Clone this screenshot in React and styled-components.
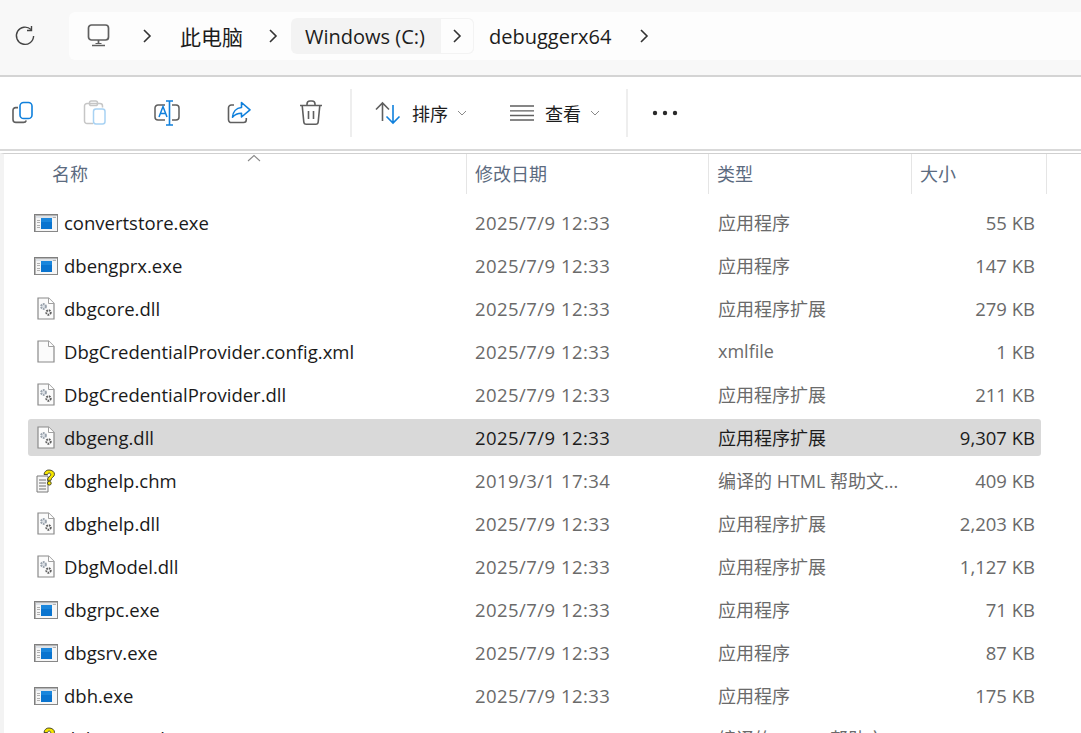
import React from "react";
import styled, { createGlobalStyle } from "styled-components";

const FONT = `"Open Sans", "Noto Sans CJK SC", sans-serif`;

const Global = createGlobalStyle`
  html, body { margin: 0; padding: 0; background: #fff; height: 733px; overflow: hidden; }
  body { font-family: ${FONT}; }
`;

const Page = styled.div`
  width: 1081px;
  height: 733px;
  display: flex;
  flex-direction: column;
  overflow: hidden;
  background: #fff;
`;

const AddressBar = styled.header`
  height: 75px;
  flex: none;
  background: #f8f8f8;
  border-bottom: 2px solid #d4d4d4;
  display: flex;
  align-items: center;
`;

const Refresh = styled.div`
  width: 69px;
  flex: none;
  display: flex;
  justify-content: center;
  padding-right: 20px;
  box-sizing: border-box;
  margin-top: -3px;
`;

const Crumbs = styled.nav`
  flex: 1;
  height: 48px;
  margin-top: -3px;
  background: #fdfdfd;
  border-radius: 6px 0 0 6px;
  display: flex;
  align-items: center;
  padding-left: 18px;
`;

const CrumbText = styled.span`
  font-size: ${(p) => p.$size}px;
  color: #1c1c1c;
  white-space: nowrap;
  margin-left: ${(p) => p.$ml || 0}px;
`;

const ChevronSlot = styled.span`
  display: flex;
  box-sizing: border-box;
  width: ${(p) => p.$w}px;
  padding-left: ${(p) => p.$pad}px;
`;

const HoverCrumb = styled.div`
  display: flex;
  align-items: stretch;
  height: 36px;
  background: #f3f3f3;
  border-radius: 6px;
  padding-left: 14px;
`;

const HoverLabel = styled.span`
  display: flex;
  align-items: center;
  width: 136px;
  font-size: 20px;
  color: #1c1c1c;
  white-space: nowrap;
`;

const HoverChevron = styled.span`
  width: 33px;
  box-sizing: border-box;
  display: flex;
  align-items: center;
  justify-content: center;
  background: #fdfdfd;
  border: 1px solid #f3f3f3;
  border-left: none;
  border-radius: 0 6px 6px 0;
`;

const Toolbar = styled.div`
  height: 72px;
  flex: none;
  display: flex;
  align-items: center;
  border-bottom: 2px solid #d9d9d9;
`;

const IconButton = styled.span`
  width: 72px;
  flex: none;
  display: flex;
  justify-content: center;
  &:first-child { width: 46px; margin-right: 13px; }
`;

const Divider = styled.span`
  width: 2px;
  height: 48px;
  background: #eeeeee;
  flex: none;
  margin: ${(p) => p.$margin};
`;

const MenuButton = styled.span`
  display: flex;
  align-items: center;
  flex: none;
  width: ${(p) => p.$w}px;
  font-size: 18px;
  color: #1c1c1c;
`;

const MenuLabel = styled.span`
  margin: 0 9px 0 11px;
  white-space: nowrap;
`;

const Pane = styled.main`
  flex: 1;
  min-height: 0;
  margin-top: 2px;
  border-top: 1px solid #d0d0d0;
  border-left: 4px solid #f3f3f3;
  position: relative;
`;

const SortCaret = styled.svg`
  position: absolute;
  left: 243px;
  top: 0;
`;

const HeaderRow = styled.div`
  height: 40px;
  display: grid;
  grid-template-columns: 463px 242px 203px 135px;
  font-size: 18px;
  color: #5c6b80;
`;

const HeaderCell = styled.div`
  display: flex;
  align-items: center;
  box-sizing: border-box;
  padding: 0 0 2px ${(p) => p.$pad}px;
  border-right: 1px solid #e5e5e5;
  white-space: nowrap;
`;

const List = styled.div`
  margin: 10px 0 0 24px;
  width: 1013px;
  display: flex;
  flex-direction: column;
  gap: 6px;
`;

const Row = styled.div`
  height: 37px;
  flex: none;
  display: grid;
  grid-template-columns: 439px 242px 203px 123px;
  align-items: center;
  border-radius: 3px;
  color: ${(p) => (p.$selected ? "#1c1c1c" : "#6a6a6a")};
  background: ${(p) => (p.$selected ? "#d9d9d9" : "transparent")};
`;

const NameCell = styled.div`
  display: flex;
  align-items: center;
  white-space: nowrap;
  color: #1a1a1a;
  font-size: 18.5px;
`;

const IconSlot = styled.span`
  width: 36px;
  flex: none;
  display: flex;
  justify-content: center;
`;

const DateCell = styled.div`
  white-space: nowrap;
  padding-left: 8px;
  font-size: 18.5px;
  letter-spacing: 0.45px;
`;

const TypeCell = styled.div`
  white-space: nowrap;
  padding: 0 0 2px 9px;
  font-size: 18px;
`;

const SizeCell = styled.div`
  white-space: nowrap;
  text-align: right;
  font-size: 18.5px;
`;

const Chevron = ({ c = "#333" }) => (
  <svg width="10" height="16" viewBox="0 0 10 16" fill="none">
    <path d="M2 2l6 6-6 6" stroke={c} strokeWidth="1.6" />
  </svg>
);

const SmallChevron = () => (
  <svg width="10" height="6" viewBox="0 0 10 6" fill="none">
    <path d="M1 1l4 4 4-4" stroke="#8a8a8a" strokeWidth="1" />
  </svg>
);

const RefreshIcon = () => (
  <svg width="22" height="22" viewBox="0 0 22 22" fill="none" stroke="#444" strokeWidth="1.4">
    <path d="M17 4.6A8.6 8.6 0 1 0 19.6 11" />
    <path d="M17.5 1v4.5H13" />
  </svg>
);

const MonitorIcon = () => (
  <svg width="24" height="24" viewBox="0 0 24 24" fill="none" stroke="#5f5f5f" strokeWidth="1.7">
    <rect x="1.5" y="1" width="20" height="15" rx="3" />
    <path d="M11.5 16v4M5 21.5h13" />
    <path d="M8.5 19.5h6" strokeWidth="1" />
  </svg>
);

const CopyIcon = () => (
  <svg width="24" height="24" viewBox="0 0 24 24" fill="none" strokeWidth="1.6">
    <path d="M7 6.6H4.6A2.6 2.6 0 0 0 2 9.2v9.2a3 3 0 0 0 3 3h7.5a3 3 0 0 0 2.8-2" stroke="#5f5f5f" />
    <rect x="9" y="1.5" width="12" height="16" rx="3.6" stroke="#1080dc" />
  </svg>
);

const PasteIcon = () => (
  <svg width="24" height="26" viewBox="0 0 24 26" fill="none" strokeWidth="1.5">
    <path d="M10 23.5H4a2.5 2.5 0 0 1-2.5-2.5V6A2.5 2.5 0 0 1 4 3.5h13A2.5 2.5 0 0 1 19.5 6v1.5" stroke="#c6c6c6" />
    <rect x="6.5" y="1" width="8" height="4.5" rx="1.8" stroke="#c6c6c6" />
    <rect x="10.5" y="9" width="11.5" height="15" rx="2.5" stroke="#a8d2f3" />
  </svg>
);

const RenameIcon = () => (
  <svg width="26" height="26" viewBox="0 0 26 26" fill="none" strokeWidth="1.5">
    <path d="M11 5H4a3 3 0 0 0-3 3v9a3 3 0 0 0 3 3h7M18 5h4a3 3 0 0 1 3 3v9a3 3 0 0 1-3 3h-4" stroke="#5f5f5f" />
    <path d="M5 17l4-10.5L13 17M6.4 13.5h5.2" stroke="#1080dc" />
    <path d="M15.5 1v24M12 1h7M12 25h7" stroke="#1080dc" strokeWidth="1.6" />
  </svg>
);

const ShareIcon = () => (
  <svg width="24" height="24" viewBox="0 0 24 24" fill="none" strokeWidth="1.6">
    <path d="M7 4H4.5A2.8 2.8 0 0 0 1.5 6.8v12a2.8 2.8 0 0 0 3 2.7h12a2.8 2.8 0 0 0 2.8-2.8V17" stroke="#5f5f5f" />
    <path d="M14.5 1.5L23 8.8l-8.5 7.2v-3.8c-3.4 0-6.5 1-9 4 .4-5.300 3.700-9.300 9-9.700z" stroke="#1080dc" strokeLinejoin="round" />
  </svg>
);

const TrashIcon = () => (
  <svg width="24" height="26" viewBox="0 0 24 26" fill="none" stroke="#5f5f5f" strokeWidth="1.6">
    <path d="M1 5.500h22M8 5.500V4a3 3 0 0 1 3-3h2a3 3 0 0 1 3 3v1.500" />
    <path d="M3.200 5.500l1.600 16.500a2.500 2.500 0 0 0 2.500 2.300h9.400a2.500 2.500 0 0 0 2.500-2.300l1.600-16.500" />
    <path d="M9.500 11v8M14.500 11v8" />
  </svg>
);

const SortIcon = () => (
  <svg width="26" height="24" viewBox="0 0 26 24" fill="none" strokeWidth="1.6">
    <path d="M7.500 20V2M1 8.500l6.500-6.500L14 8.500" stroke="#5f5f5f" />
    <path d="M18 4v18M11.500 15.500L18 22l6.500-6.500" stroke="#1080dc" />
  </svg>
);

const ViewIcon = () => (
  <svg width="24" height="18" viewBox="0 0 24 18" fill="none" stroke="#5f5f5f" strokeWidth="1.3">
    <path d="M0 2h24M0 6.800h24M0 11.500h24M0 16h24" />
  </svg>
);

const MoreIcon = () => (
  <svg width="26" height="6" viewBox="0 0 26 6" fill="#2a2a2a">
    <circle cx="3" cy="3" r="2.200" />
    <circle cx="13" cy="3" r="2.200" />
    <circle cx="23" cy="3" r="2.200" />
  </svg>
);

const ExeIcon = () => (
  <svg width="24" height="18" viewBox="0 0 24 18" shapeRendering="crispEdges">
    <rect x="0.500" y="0.500" width="23" height="17" fill="#f6f6f6" stroke="#7f7f7f" />
    <rect x="1" y="1" width="22" height="16" fill="none" stroke="#8c8c8c" strokeWidth="0.600" />
    <rect x="2" y="2" width="20" height="2" fill="#dfe3e8" />
    <path d="M3 6h3M3 8.500h3M3 11h3M3 13.500h3M19 3h3" stroke="#b0b0b0" strokeWidth="1" />
    <rect x="7" y="4" width="11" height="11" fill="#0a74cf" />
    <rect x="7" y="4" width="11" height="4" fill="#1a86dc" />
  </svg>
);

const Doc = ({ children }) => (
  <svg width="18" height="23" viewBox="0 0 18 23">
    <path d="M1 1h10.500L17 6.500V22H1z" fill="#fbfbfb" stroke="#8a8a8a" strokeWidth="1.200" />
    <path d="M11.500 1v5.500H17" fill="#fff" stroke="#a0a0a0" />
    {children}
  </svg>
);

const DllIcon = () => (
  <Doc>
    <circle cx="6.500" cy="9.500" r="2.400" fill="#dfe3e8" stroke="#9aa3ad" strokeWidth="2" strokeDasharray="1.600 0.800" />
    <circle cx="11.500" cy="15.500" r="2.200" fill="#fff" stroke="#5c5c5c" strokeWidth="2" strokeDasharray="1.600 0.800" />
  </Doc>
);

const BlankIcon = () => <Doc />;

const ChmIcon = () => (
  <svg width="20" height="24" viewBox="0 0 20 24">
    <path d="M1 7h11v16H1z" fill="#f6f6f6" stroke="#7a7a7a" />
    <path d="M3 11h7M3 14h7M3 17h7M3 20h7" stroke="#6f6f6f" />
    <path d="M8 5.500A4.800 4.800 0 0 1 13 1c3 0 5.500 1.800 5.500 4.300 0 2.700-3.500 3-3.500 6H11.500c0-3.500 3.200-3.700 3.200-5.700 0-2-3-2-3.200 0z" fill="#f5e500" stroke="#3a3a20" strokeWidth="0.900" />
    <circle cx="13.300" cy="14.200" r="1.900" fill="#f5e500" stroke="#3a3a20" strokeWidth="0.900" />
  </svg>
);

const ICONS = { exe: ExeIcon, dll: DllIcon, blank: BlankIcon, chm: ChmIcon };

const FILES = [
  ["exe", "convertstore.exe", "2025/7/9 12:33", "应用程序", "55 KB"],
  ["exe", "dbengprx.exe", "2025/7/9 12:33", "应用程序", "147 KB"],
  ["dll", "dbgcore.dll", "2025/7/9 12:33", "应用程序扩展", "279 KB"],
  ["blank", "DbgCredentialProvider.config.xml", "2025/7/9 12:33", "xmlfile", "1 KB"],
  ["dll", "DbgCredentialProvider.dll", "2025/7/9 12:33", "应用程序扩展", "211 KB"],
  ["dll", "dbgeng.dll", "2025/7/9 12:33", "应用程序扩展", "9,307 KB", true],
  ["chm", "dbghelp.chm", "2019/3/1 17:34", "编译的 HTML 帮助文...", "409 KB"],
  ["dll", "dbghelp.dll", "2025/7/9 12:33", "应用程序扩展", "2,203 KB"],
  ["dll", "DbgModel.dll", "2025/7/9 12:33", "应用程序扩展", "1,127 KB"],
  ["exe", "dbgrpc.exe", "2025/7/9 12:33", "应用程序", "71 KB"],
  ["exe", "dbgsrv.exe", "2025/7/9 12:33", "应用程序", "87 KB"],
  ["exe", "dbh.exe", "2025/7/9 12:33", "应用程序", "175 KB"],
  ["chm", "debugger.chm", "2019/3/1 17:34", "编译的 HTML 帮助文...", "7,285 KB"],
];

export default function App() {
  return (
    <Page>
      <Global />
      <AddressBar>
        <Refresh>
          <RefreshIcon />
        </Refresh>
        <Crumbs>
          <MonitorIcon />
          <ChevronSlot $w={69} $pad={31}><Chevron /></ChevronSlot>
          <CrumbText $size={21}>此电脑</CrumbText>
          <ChevronSlot $w={48} $pad={25}><Chevron /></ChevronSlot>
          <HoverCrumb>
            <HoverLabel>Windows (C:)</HoverLabel>
            <HoverChevron><Chevron /></HoverChevron>
          </HoverCrumb>
          <CrumbText $size={20} $ml={15}>debuggerx64</CrumbText>
          <ChevronSlot $w={66} $pad={28}><Chevron /></ChevronSlot>
        </Crumbs>
      </AddressBar>
      <Toolbar>
        <IconButton><CopyIcon /></IconButton>
        <IconButton><PasteIcon /></IconButton>
        <IconButton><RenameIcon /></IconButton>
        <IconButton><ShareIcon /></IconButton>
        <IconButton><TrashIcon /></IconButton>
        <Divider $margin="0 23px 0 3px" />
        <MenuButton $w={135}>
          <SortIcon />
          <MenuLabel>排序</MenuLabel>
          <SmallChevron />
        </MenuButton>
        <MenuButton $w={116}>
          <ViewIcon />
          <MenuLabel>查看</MenuLabel>
          <SmallChevron />
        </MenuButton>
        <Divider $margin="0 24px 0 0" />
        <MoreIcon />
      </Toolbar>
      <Pane>
        <SortCaret width="14" height="8" viewBox="0 0 14 8" fill="none">
          <path d="M1 7l6-5.500L13 7" stroke="#8a8a8a" strokeWidth="1.100" />
        </SortCaret>
        <HeaderRow>
          <HeaderCell $pad={48}>名称</HeaderCell>
          <HeaderCell $pad={8}>修改日期</HeaderCell>
          <HeaderCell $pad={8}>类型</HeaderCell>
          <HeaderCell $pad={8}>大小</HeaderCell>
        </HeaderRow>
        <List>
          {FILES.map(([icon, name, date, type, size, selected]) => {
            const Icon = ICONS[icon];
            return (
              <Row key={name} $selected={selected}>
                <NameCell>
                  <IconSlot><Icon /></IconSlot>
                  {name}
                </NameCell>
                <DateCell>{date}</DateCell>
                <TypeCell>{type}</TypeCell>
                <SizeCell>{size}</SizeCell>
              </Row>
            );
          })}
        </List>
      </Pane>
    </Page>
  );
}
